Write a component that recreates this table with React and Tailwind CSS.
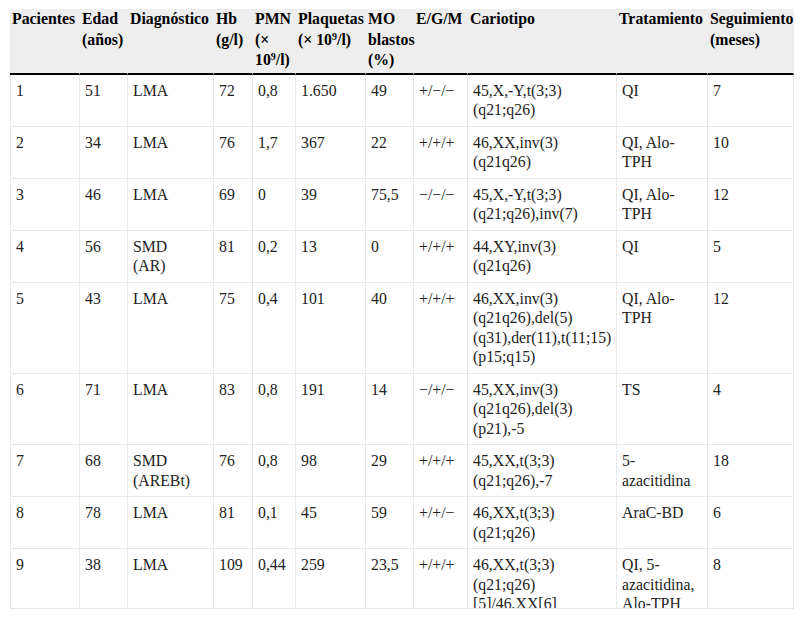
import React from 'react';

const cols = [70, 48, 86, 39, 43, 70, 48, 54, 149, 91, 86];

const Sup9 = () => <sup className="text-[10px]">9</sup>;

const headers = [
  ['Pacientes'],
  ['Edad', '(años)'],
  ['Diagnóstico'],
  ['Hb', '(g/l)'],
  ['PMN', '(×', <>10<Sup9 />/l)</>],
  ['Plaquetas', <>(× 10<Sup9 />/l)</>],
  ['MO', 'blastos', '(%)'],
  ['E/G/M'],
  ['Cariotipo'],
  ['Tratamiento'],
  ['Seguimiento', '(meses)'],
];

const rows = [
  [['1'], ['51'], ['LMA'], ['72'], ['0,8'], ['1.650'], ['49'], ['+/−/−'], ['45,X,-Y,t(3;3)', '(q21;q26)'], ['QI'], ['7']],
  [['2'], ['34'], ['LMA'], ['76'], ['1,7'], ['367'], ['22'], ['+/+/+'], ['46,XX,inv(3)', '(q21q26)'], ['QI, Alo-', 'TPH'], ['10']],
  [['3'], ['46'], ['LMA'], ['69'], ['0'], ['39'], ['75,5'], ['−/−/−'], ['45,X,-Y,t(3;3)', '(q21;q26),inv(7)'], ['QI, Alo-', 'TPH'], ['12']],
  [['4'], ['56'], ['SMD', '(AR)'], ['81'], ['0,2'], ['13'], ['0'], ['+/+/+'], ['44,XY,inv(3)', '(q21q26)'], ['QI'], ['5']],
  [['5'], ['43'], ['LMA'], ['75'], ['0,4'], ['101'], ['40'], ['+/+/+'], ['46,XX,inv(3)', '(q21q26),del(5)', '(q31),der(11),t(11;15)', '(p15;q15)'], ['QI, Alo-', 'TPH'], ['12']],
  [['6'], ['71'], ['LMA'], ['83'], ['0,8'], ['191'], ['14'], ['−/+/−'], ['45,XX,inv(3)', '(q21q26),del(3)', '(p21),-5'], ['TS'], ['4']],
  [['7'], ['68'], ['SMD', '(AREBt)'], ['76'], ['0,8'], ['98'], ['29'], ['+/+/+'], ['45,XX,t(3;3)', '(q21;q26),-7'], ['5-', 'azacitidina'], ['18']],
  [['8'], ['78'], ['LMA'], ['81'], ['0,1'], ['45'], ['59'], ['+/+/−'], ['46,XX,t(3;3)', '(q21;q26)'], ['AraC-BD'], ['6']],
  [['9'], ['38'], ['LMA'], ['109'], ['0,44'], ['259'], ['23,5'], ['+/+/+'], ['46,XX,t(3;3)', '(q21;q26)', '[5]/46,XX[6]'], ['QI, 5-', 'azacitidina,', 'Alo-TPH'], ['8']],
];

const Lines = ({ lines }) => (
  <>
    {lines.map((l, i) => (
      <div key={i} className="whitespace-nowrap">{l}</div>
    ))}
  </>
);

export default function App() {
  return (
    <div className="min-h-[619px] bg-white pt-[9px] pl-[10px] font-['Liberation_Serif','Times_New_Roman',serif]">
      {/* table is cut off at the bottom, like the source page */}
      <div className="box-border h-[600px] w-[784px] overflow-hidden border-b border-[#e8e8e8]">
        <table className="table-fixed border-separate border-spacing-0 w-[784px] text-[15.8px]">
          <colgroup>
            {cols.map((w, i) => (
              <col key={i} style={{ width: w }} />
            ))}
          </colgroup>
          <thead>
            <tr>
              {headers.map((h, i) => (
                <th
                  key={i}
                  className="bg-[#eeeeee] border-b-2 border-b-black border-r border-r-[#eeeeee] pl-[2px] pr-0 pt-0 pb-[2px] align-top text-left font-bold text-black leading-[20.5px]"
                >
                  <Lines lines={h} />
                </th>
              ))}
            </tr>
          </thead>
          <tbody>
            {rows.map((r, ri) => (
              <tr key={ri}>
                {r.map((c, ci) => (
                  <td
                    key={ci}
                    className={`border-b border-r border-[#e8e8e8] pl-[5px] pr-0 py-[6px] align-top text-[#222] leading-[19.5px] ${ci === 0 ? 'border-l' : ''}`}
                  >
                    <Lines lines={c} />
                  </td>
                ))}
              </tr>
            ))}
          </tbody>
        </table>
      </div>
    </div>
  );
}
